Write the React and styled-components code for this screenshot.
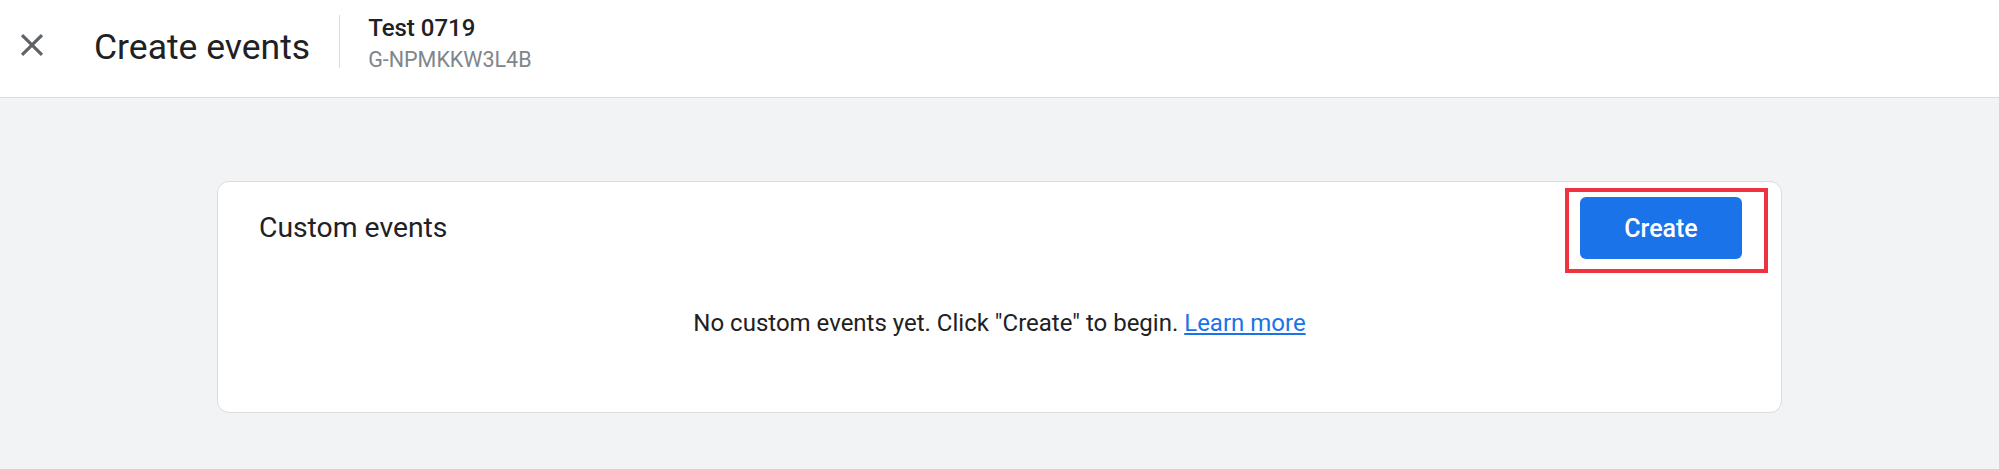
import React from "react";
import styled, { createGlobalStyle } from "styled-components";

const GlobalStyle = createGlobalStyle`
  html, body {
    margin: 0;
    padding: 0;
    background: #f1f3f4;
    font-family: Roboto, "Liberation Sans", Arial, sans-serif;
    color: #202124;
  }
  * { box-sizing: border-box; }
`;

const Page = styled.div`
  min-height: 469px;
  background: #f1f3f4;
`;

const TopBar = styled.header`
  height: 98px;
  background: #ffffff;
  border-bottom: 1px solid #dadce0;
  display: flex;
  align-items: center;
  padding: 0 0 7px 13px;
`;

const CloseButton = styled.button`
  width: 38px;
  height: 38px;
  padding: 0;
  border: 0;
  background: transparent;
  color: #5f6368;
  display: flex;
  align-items: center;
  justify-content: center;
  cursor: pointer;
`;

const PageTitle = styled.h1`
  margin: 3px 0 0 43px;
  font-size: 35.5px;
  line-height: 42px;
  font-weight: 400;
  color: #202124;
  letter-spacing: 0;
`;

const Divider = styled.div`
  width: 1px;
  height: 53px;
  background: #dadce0;
  margin: 0 28px 7px 29px;
`;

const PropertyInfo = styled.div`
  display: flex;
  flex-direction: column;
  margin-bottom: 4px;
`;

const PropertyName = styled.div`
  font-size: 24px;
  line-height: 32px;
  font-weight: 500;
  color: #202124;
`;

const PropertyId = styled.div`
  margin-top: 2px;
  font-size: 21.5px;
  line-height: 28px;
  color: #80868b;
`;

const Content = styled.main`
  padding: 83px 217px 56px;
`;

const Card = styled.section`
  background: #ffffff;
  border: 1px solid #dadce0;
  border-radius: 12px;
  min-height: 232px;
`;

const CardHeader = styled.div`
  display: flex;
  align-items: center;
  justify-content: space-between;
  padding: 15px 39px 16px 41px;
`;

const CardTitle = styled.h2`
  margin: 0;
  font-size: 28.3px;
  line-height: 36px;
  font-weight: 400;
  color: #202124;
`;

const Highlight = styled.div`
  position: relative;
  display: flex;
  &::after {
    content: "";
    position: absolute;
    top: -9px;
    left: -15px;
    right: -26px;
    bottom: -14px;
    border: 4px solid #ee3340;
    pointer-events: none;
  }
`;

const PrimaryButton = styled.button`
  height: 62px;
  width: 162px;
  border: 0;
  border-radius: 6px;
  background: #1a73e8;
  color: #ffffff;
  font-family: Roboto, "Liberation Sans", Arial, sans-serif;
  font-size: 25px;
  font-weight: 500;
  cursor: pointer;
`;

const EmptyMessage = styled.p`
  margin: 0;
  padding: 32px 0 40px;
  text-align: center;
  font-size: 24px;
  line-height: 32px;
  color: #202124;
`;

const Link = styled.a`
  color: #1a73e8;
  text-decoration: underline;
`;

const CloseIcon = () => (
  <svg width="38" height="38" viewBox="0 0 24 24" fill="currentColor">
    <path d="M19 6.41L17.59 5 12 10.59 6.41 5 5 6.41 10.59 12 5 17.59 6.41 19 12 13.41 17.59 19 19 17.59 13.41 12z" />
  </svg>
);

export default function App() {
  return (
    <Page>
      <GlobalStyle />
      <TopBar>
        <CloseButton aria-label="Close">
          <CloseIcon />
        </CloseButton>
        <PageTitle>Create events</PageTitle>
        <Divider />
        <PropertyInfo>
          <PropertyName>Test 0719</PropertyName>
          <PropertyId>G-NPMKKW3L4B</PropertyId>
        </PropertyInfo>
      </TopBar>
      <Content>
        <Card>
          <CardHeader>
            <CardTitle>Custom events</CardTitle>
            <Highlight>
              <PrimaryButton>Create</PrimaryButton>
            </Highlight>
          </CardHeader>
          <EmptyMessage>
            No custom events yet. Click "Create" to begin. <Link href="#">Learn more</Link>
          </EmptyMessage>
        </Card>
      </Content>
    </Page>
  );
}
